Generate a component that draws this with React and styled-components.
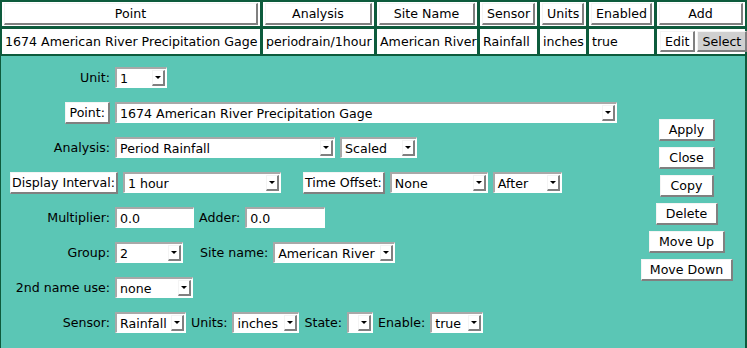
import React from 'react';
import styled, { createGlobalStyle } from 'styled-components';

const Global = createGlobalStyle`
  html, body { margin: 0; padding: 0; background: #0d5b3c; }
  body { font-family: "DejaVu Sans", sans-serif; font-size: 12.6px; color: #000; }
`;

const Frame = styled.div`
  width: 747px;
  height: 348px;
  background: #0d5b3c;
  display: flex;
  flex-direction: column;
  overflow: hidden;
`;

const Grid = styled.div`
  display: grid;
  grid-template-columns: 258px 111px 100px 57px 46px 65px 88px;
  column-gap: 3px;
  row-gap: 3px;
  padding: 2px 2px 0 2px;
`;

const HeadCell = styled.div`
  height: 24px;
  display: flex;
  padding: 1px 2px 1px 2px;
  box-sizing: border-box;
  background: #ffffff;
`;

const RaisedButton = styled.button`
  font: inherit;
  color: #000;
  border-style: solid;
  border-width: 1px 2px 2px 1px;
  border-color: #f4f4f4 #808080 #808080 #f4f4f4;
  padding: 0 ${({ px }) => (px === undefined ? 4 : px)}px;
  margin: 0;
  height: ${({ h }) => h || 22}px;
  min-width: ${({ w }) => (w ? `${w}px` : 'auto')};
  white-space: nowrap;
  cursor: pointer;
  background: ${({ pressed }) => (pressed ? '#d0d0d0' : '#fff')};
`;

const HeadButton = styled(RaisedButton)`
  width: 100%;
  height: 22px;
`;

const DataCell = styled.div`
  height: 25px;
  background: #fff;
  display: flex;
  align-items: center;
  padding: 0 3px;
  box-sizing: border-box;
  white-space: nowrap;
  gap: 2px;
`;

const Panel = styled.div`
  flex: 1;
  margin: 2px 2px 0 1px;
  background: #5bc6b5;
  display: flex;
`;

const Form = styled.div`
  flex: 1;
  display: flex;
  flex-direction: column;
  padding-top: 4px;
`;

const Row = styled.div`
  display: flex;
  align-items: center;
  gap: 5px;
  height: 35px;
  padding-left: ${({ pl }) => pl || 0}px;
`;

const Label = styled.span`
  white-space: nowrap;
  width: ${({ w }) => (w ? `${w}px` : 'auto')};
  text-align: right;
  margin-left: ${({ ml }) => ml || 0}px;
`;

const SelectBox = styled.div`
  display: inline-flex;
  align-items: center;
  justify-content: space-between;
  width: ${({ w }) => w}px;
  height: 21px;
  box-sizing: border-box;
  background: #fff;
  border-style: solid;
  border-width: 2px 1px 1px 2px;
  border-color: #a8a8a8 #fff #fff #a8a8a8;
  padding-left: 3px;
  white-space: nowrap;
  overflow: hidden;
`;

const Arrow = styled.span`
  flex: none;
  width: 13px;
  height: 16px;
  margin-right: 1px;
  box-sizing: border-box;
  border-style: solid;
  border-width: 1px 2px 2px 1px;
  border-color: #f4f4f4 #808080 #808080 #f4f4f4;
  background: #fff;
  display: flex;
  align-items: center;
  justify-content: center;
  &::after {
    content: '';
    border-left: 3px solid transparent;
    border-right: 3px solid transparent;
    border-top: 3px solid #000;
  }
`;

const TextInput = styled.div`
  width: ${({ w }) => w}px;
  height: 21px;
  box-sizing: border-box;
  background: #fff;
  border-style: solid;
  border-width: 2px 1px 1px 2px;
  border-color: #a8a8a8 #fff #fff #a8a8a8;
  padding-left: 3px;
  display: flex;
  align-items: center;
`;

const Side = styled.div`
  width: 106px;
  display: flex;
  flex-direction: column;
  align-items: center;
  padding-top: 63px;
  gap: 6px;
  margin-right: 5px;
`;

const Select = ({ w, children }) => (
  <SelectBox w={w}>
    <span>{children}</span>
    <Arrow />
  </SelectBox>
);

const headers = ['Point', 'Analysis', 'Site Name', 'Sensor', 'Units', 'Enabled', 'Add'];
const row = ['1674 American River Precipitation Gage', 'periodrain/1hour', 'American River', 'Rainfall', 'inches', 'true'];

export default function App() {
  return (
    <Frame>
      <Global />
      <Grid>
        {headers.map((h) => (
          <HeadCell key={h}>
            <HeadButton>{h}</HeadButton>
          </HeadCell>
        ))}
        {row.map((c) => (
          <DataCell key={c}>{c}</DataCell>
        ))}
        <DataCell>
          <RaisedButton h={21}>Edit</RaisedButton>
          <RaisedButton h={21} pressed>Select</RaisedButton>
        </DataCell>
      </Grid>
      <Panel>
        <Form>
          <Row>
            <Label w={109}>Unit:</Label>
            <Select w={52}>1</Select>
          </Row>
          <Row>
            <Label w={109}>
              <RaisedButton px={3}>Point:</RaisedButton>
            </Label>
            <Select w={502}>1674 American River Precipitation Gage</Select>
          </Row>
          <Row>
            <Label w={109}>Analysis:</Label>
            <Select w={220}>Period Rainfall</Select>
            <Select w={77}>Scaled</Select>
          </Row>
          <Row pl={9}>
            <RaisedButton px={1}>Display Interval:</RaisedButton>
            <Select w={158}>1 hour</Select>
            <RaisedButton px={1} style={{ marginLeft: 17 }}>Time Offset:</RaisedButton>
            <Select w={98}>None</Select>
            <Select w={69}>After</Select>
          </Row>
          <Row>
            <Label w={109}>Multiplier:</Label>
            <TextInput w={79}>0.0</TextInput>
            <Label>Adder:</Label>
            <TextInput w={80}>0.0</TextInput>
          </Row>
          <Row>
            <Label w={109}>Group:</Label>
            <Select w={68}>2</Select>
            <Label ml={12}>Site name:</Label>
            <Select w={122}>American River</Select>
          </Row>
          <Row>
            <Label w={109}>2nd name use:</Label>
            <Select w={78}>none</Select>
          </Row>
          <Row>
            <Label w={109}>Sensor:</Label>
            <Select w={71}>Rainfall</Select>
            <Label>Units:</Label>
            <Select w={67}>inches</Select>
            <Label>State:</Label>
            <Select w={26}></Select>
            <Label>Enable:</Label>
            <Select w={53}>true</Select>
          </Row>
        </Form>
        <Side>
          <RaisedButton w={56}>Apply</RaisedButton>
          <RaisedButton w={56}>Close</RaisedButton>
          <RaisedButton w={54}>Copy</RaisedButton>
          <RaisedButton w={62}>Delete</RaisedButton>
          <RaisedButton w={76}>Move Up</RaisedButton>
          <RaisedButton w={92}>Move Down</RaisedButton>
        </Side>
      </Panel>
    </Frame>
  );
}
